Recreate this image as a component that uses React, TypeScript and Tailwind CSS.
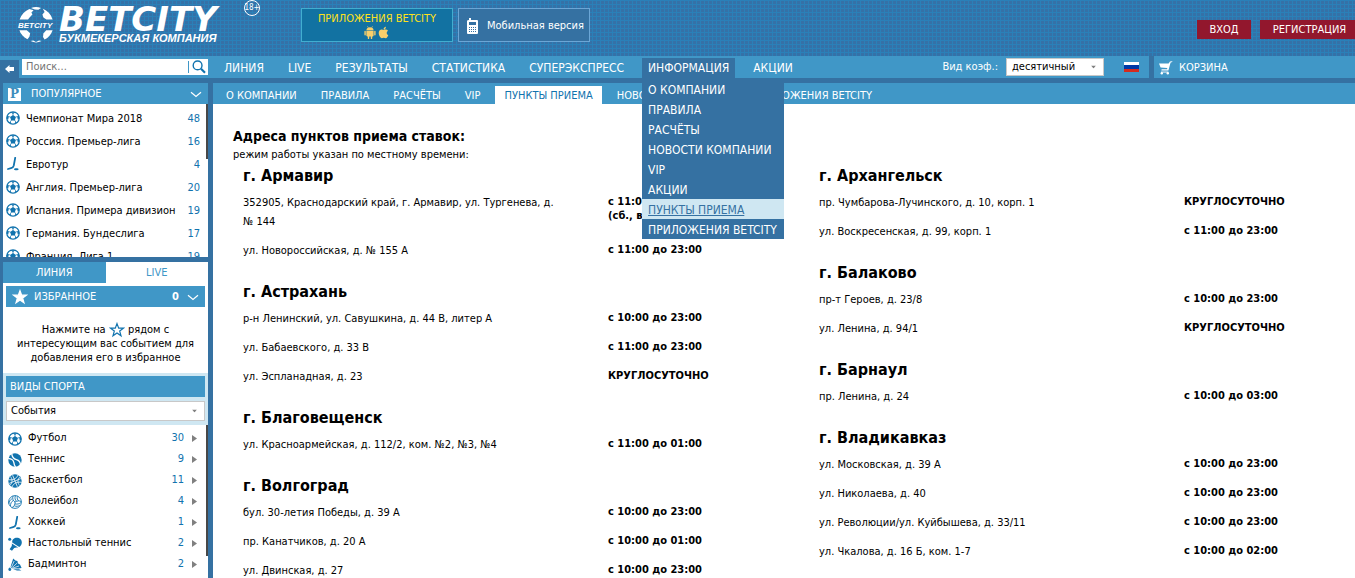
import type { ReactNode } from 'react';
import { FaApple } from 'react-icons/fa';

type IconProps = { className?: string };

function SoccerIcon({ className }: IconProps) {
  return (
    <svg viewBox="0 0 14 14" className={className} fill="none" stroke="currentColor">
      <circle cx="7" cy="7" r="6.2" strokeWidth="1.3" />
      <path d="M7 4 9.9 6.1 8.8 9.5H5.2L4.1 6.1Z" fill="currentColor" stroke="none" />
      <path d="M7 4.4V2.4M9.5 6.2l2-.8M8.6 9.1l1.3 1.9M5.4 9.1 4.1 11M4.5 6.2l-2-.8" strokeWidth=".7" />
      <path d="M4.5 1.2 7 3l2.5-1.8ZM13.1 4.2l-2 1.2.7 3 1.5-.8ZM11.7 11.2l-2.2-.4-1.4 2.4ZM2.3 11.2l2.2-.4 1.4 2.4ZM.9 4.2l2 1.2-.7 3-1.5-.8Z" fill="currentColor" stroke="none" />
    </svg>
  );
}

function HockeyIcon({ className }: IconProps) {
  return (
    <svg viewBox="0 0 14 14" className={className} fill="none" stroke="currentColor">
      <path d="M9.2.8 7.8 8.4Q7.2 10.6 5 11.2L2 12" strokeWidth="1.8" strokeLinecap="round" />
      <path d="M8 12.2c0-1.3 4.6-1.3 4.6 0s-4.6 1.3-4.6 0Z" fill="currentColor" stroke="none" />
    </svg>
  );
}

function TennisIcon({ className }: IconProps) {
  return (
    <svg viewBox="0 0 14 14" className={className}>
      <circle cx="7" cy="7" r="6.7" fill="currentColor" />
      <path d="M3.8.6C4 4.6 6 6 8.4 6.6s4 2 4 5.4M.2 5.4c3 .3 5.2 1.8 5.6 4 .2 1.4.6 3.2 1.8 4.6" fill="none" stroke="#fff" strokeWidth="1.3" />
    </svg>
  );
}

function BasketballIcon({ className }: IconProps) {
  return (
    <svg viewBox="0 0 14 14" className={className}>
      <circle cx="7" cy="7" r="6.7" fill="currentColor" />
      <path d="M1.2 9.4 12.8 4.6M4.6 1.2 9.4 12.8M.4 5.6C4.4 6.6 8.6 4.8 10 1M13.6 8.4C9.6 7.4 5.4 9.2 4 13M2.2 2.4C5 5 4.4 9.6 1.8 11.4M11.8 11.6C9 9 9.6 4.4 12.2 2.6" fill="none" stroke="#fff" strokeWidth=".8" />
    </svg>
  );
}

function VolleyballIcon({ className }: IconProps) {
  return (
    <svg viewBox="0 0 14 14" className={className} fill="none" stroke="currentColor" strokeWidth=".9">
      <circle cx="7" cy="7" r="6.4" />
      <path d="M7 7C5 5.8 4.2 3.6 5 1M7 7c2.4-1.4 4.4-1.4 6.3-.4M7 7c.2 2.6-1 4.8-3.2 5.7M8.6 6.3C7 5 6.6 3 7.4.7M10.8 5.8C9.4 5 8.8 3.2 9.5 1.3M7 8.9c2.2.5 4.2.1 5.8-1.3M6.3 10.8c2 .8 3.8.7 5.4-.5M5.2 5.5C3.4 6.6 2.4 8.6 2.5 11M3.9 3.8C2 5 1 6.6.8 8.6" />
    </svg>
  );
}

function TableTennisIcon({ className }: IconProps) {
  return (
    <svg viewBox="0 0 14 14" className={className} fill="currentColor">
      <circle cx="1.7" cy="2.2" r="1.5" />
      <path d="M4.2 5.4C4 2.4 6.2.8 8.8.8c2.8 0 5 2 5 4.8 0 2.2-1.2 3.6-2.6 4.4Z" />
      <path d="M3.8 6.4 10.2 10.6Q7.4 10.2 6.2 11L4 13.8 1.6 12.2 3.6 9.2Q4.2 8 3.8 6.4Z" />
    </svg>
  );
}

function BadmintonIcon({ className }: IconProps) {
  return (
    <svg viewBox="0 0 14 14" className={className} fill="currentColor">
      <path d="M5.2.4 7.4 2.6 9.4 3 10 5.6 12 6.4 13.6 10 10.4 10.4 3.8 10.2 2.6 8.4Z" />
      <path d="M2 9.3 3.4 11.2 2.4 13C1 13.4 0 12.2.4 10.8Z" />
      <path d="M3.4 9.2 6.2 3M4.2 9.6 9.2 5M4.8 10 11 8" stroke="#fff" strokeWidth=".7" fill="none" />
      <path d="M5 11.2h6l2.4 1.4H9Z" />
    </svg>
  );
}

function AndroidIcon({ className }: IconProps) {
  return (
    <svg viewBox="0 0 12 13" className={className} fill="currentColor">
      <path d="M2.4 4.2C2.4 2.4 4 1.2 6 1.2s3.6 1.2 3.6 3Z" />
      <path d="M3.4.2 4.4 1.8M8.6.2 7.6 1.8" stroke="currentColor" strokeWidth=".6" />
      <path d="M2.4 4.8h7.2v4.8q0 .8-.8.8H8.2v2q0 .6-.7.6t-.7-.6v-2H5.2v2q0 .6-.7.6t-.7-.6v-2H3.2q-.8 0-.8-.8Z" />
      <path d="M1.1 5.4v3.4M10.9 5.4v3.4" stroke="currentColor" strokeWidth="1.4" strokeLinecap="round" />
    </svg>
  );
}

function ChevronIcon({ className }: IconProps) {
  return (
    <svg viewBox="0 0 12 7" className={className} fill="none" stroke="currentColor" strokeWidth="1.2">
      <path d="M1 1.2 6 5.4 11 1.2" />
    </svg>
  );
}

function StarIcon({ className, filled }: IconProps & { filled?: boolean }) {
  return (
    <svg viewBox="0 0 16 16" className={className} fill={filled ? 'currentColor' : 'none'} stroke="currentColor" strokeWidth="1.2">
      <path d="M8 1.6 9.7 6.2H14.4L10.7 9.1 12 13.8 8 11 4 13.8 5.3 9.1 1.6 6.2H6.3Z" />
    </svg>
  );
}

function GlobeLogo() {
  return (
    <svg viewBox="0 0 38 38" className="h-[38px] w-[38px] shrink-0 overflow-visible">
      <g fill="#fff">
        <path d="M2.6 13.4C4.4 8.4 8 4.8 12.4 3L16.6 4.2 14.4 6.6 15.4 8.4 12.8 11.2 11 13.6Z" />
        <path d="M14 2Q19 .2 24 2L21.4 3.8 17.8 3.4Z" />
        <path d="M25.8 2.8C30.4 4.6 34 8.2 35.6 13.4H29.4L26.4 11.6 25.4 8.4 27.6 6Z" />
        <path d="M2.4 24.2H9.8L13.2 27.2 12.4 30.8 10.4 33.2C6.4 31 3.6 28 2.4 24.2Z" />
        <path d="M35.6 24.2C34.2 28.4 31.4 31.6 27.6 33.6L26 31 26.4 27.6 29.2 24.2Z" />
        <path d="M13.6 35 16.2 34.6 19 36 22 34.6 24.6 35Q19 37.8 13.6 35Z" />
      </g>
      <text x="1" y="22" fill="#fff" fontSize="8" fontWeight="700" fontStyle="italic" fontFamily="Liberation Sans, sans-serif">
        BETCITY
      </text>
    </svg>
  );
}

const popular = [
  { title: 'Чемпионат Мира 2018', count: 48, icon: SoccerIcon },
  { title: 'Россия. Премьер-лига', count: 16, icon: SoccerIcon },
  { title: 'Евротур', count: 4, icon: HockeyIcon },
  { title: 'Англия. Премьер-лига', count: 20, icon: SoccerIcon },
  { title: 'Испания. Примера дивизион', count: 19, icon: SoccerIcon },
  { title: 'Германия. Бундеслига', count: 17, icon: SoccerIcon },
  { title: 'Франция. Лига 1', count: 19, icon: SoccerIcon },
];

const sports = [
  { title: 'Футбол', count: 30, icon: SoccerIcon },
  { title: 'Теннис', count: 9, icon: TennisIcon },
  { title: 'Баскетбол', count: 11, icon: BasketballIcon },
  { title: 'Волейбол', count: 4, icon: VolleyballIcon },
  { title: 'Хоккей', count: 1, icon: HockeyIcon },
  { title: 'Настольный теннис', count: 2, icon: TableTennisIcon },
  { title: 'Бадминтон', count: 2, icon: BadmintonIcon },
];

const mainNav = ['ЛИНИЯ', 'LIVE', 'РЕЗУЛЬТАТЫ', 'СТАТИСТИКА', 'СУПЕРЭКСПРЕСС', 'ИНФОРМАЦИЯ', 'АКЦИИ'];

const infoMenu = ['О КОМПАНИИ', 'ПРАВИЛА', 'РАСЧЁТЫ', 'НОВОСТИ КОМПАНИИ', 'VIP', 'АКЦИИ', 'ПУНКТЫ ПРИЕМА', 'ПРИЛОЖЕНИЯ BETCITY'];

const subNav = ['О КОМПАНИИ', 'ПРАВИЛА', 'РАСЧЁТЫ', 'VIP', 'ПУНКТЫ ПРИЕМА', 'НОВОСТИ КОМПАНИИ', 'ПРИЛОЖЕНИЯ BETCITY'];

type City = { name: string; points: [string, string][] };

const leftCities: City[] = [
  {
    name: 'г. Армавир',
    points: [
      ['352905, Краснодарский край, г. Армавир, ул. Тургенева, д. № 144', 'с 11:00 до 22:00 (сб., вс. до 23:00)'],
      ['ул. Новороссийская, д. № 155 А', 'с 11:00 до 23:00'],
    ],
  },
  {
    name: 'г. Астрахань',
    points: [
      ['р-н Ленинский, ул. Савушкина, д. 44 В, литер А', 'с 10:00 до 23:00'],
      ['ул. Бабаевского, д. 33 В', 'с 11:00 до 23:00'],
      ['ул. Эспланадная, д. 23', 'КРУГЛОСУТОЧНО'],
    ],
  },
  {
    name: 'г. Благовещенск',
    points: [['ул. Красноармейская, д. 112/2, ком. №2, №3, №4', 'с 11:00 до 01:00']],
  },
  {
    name: 'г. Волгоград',
    points: [
      ['бул. 30-летия Победы, д. 39 А', 'с 10:00 до 23:00'],
      ['пр. Канатчиков, д. 20 А', 'с 10:00 до 01:00'],
      ['ул. Двинская, д. 27', 'с 10:00 до 23:00'],
    ],
  },
];

const rightCities: City[] = [
  {
    name: 'г. Архангельск',
    points: [
      ['пр. Чумбарова-Лучинского, д. 10, корп. 1', 'КРУГЛОСУТОЧНО'],
      ['ул. Воскресенская, д. 99, корп. 1', 'с 11:00 до 23:00'],
    ],
  },
  {
    name: 'г. Балаково',
    points: [
      ['пр-т Героев, д. 23/8', 'с 10:00 до 23:00'],
      ['ул. Ленина, д. 94/1', 'КРУГЛОСУТОЧНО'],
    ],
  },
  {
    name: 'г. Барнаул',
    points: [['пр. Ленина, д. 24', 'с 10:00 до 03:00']],
  },
  {
    name: 'г. Владикавказ',
    points: [
      ['ул. Московская, д. 39 А', 'с 10:00 до 23:00'],
      ['ул. Николаева, д. 40', 'с 10:00 до 23:00'],
      ['ул. Революции/ул. Куйбышева, д. 33/11', 'с 10:00 до 23:00'],
      ['ул. Чкалова, д. 16 Б, ком. 1-7', 'с 10:00 до 02:00'],
    ],
  },
];

function Header() {
  return (
    <header className="flex h-14 shrink-0 items-start bg-[#3571a7] bg-[linear-gradient(to_right,#2a80b8_1px,transparent_1px),linear-gradient(to_bottom,#2a80b8_1px,transparent_1px)] bg-[size:4px_4px] text-white">
      <a href="#" className="flex w-[301px] pt-1.5 pl-[17px]">
        <GlobeLogo />
        <span className="ml-1 flex w-[177px] flex-col font-['Liberation_Sans',sans-serif] font-bold italic">
          <span className="font-['DejaVu_Sans',sans-serif] text-[34px] leading-[26px]">BETCITY</span>
          <span className="text-[11px] leading-3 whitespace-nowrap">БУКМЕКЕРСКАЯ КОМПАНИЯ</span>
        </span>
        <span className="-mt-1.5 ml-2 flex h-4 w-4 items-center justify-center rounded-full border border-white text-[8px]">18+</span>
      </a>
      <div className="flex gap-[5px] pt-2">
        <a href="#" className="flex h-[34px] w-[152px] flex-col items-center border border-[#42aed0] bg-[#1272a2] pt-[3px] text-[11px] leading-[14px] whitespace-nowrap text-[#ffe11b]">
          ПРИЛОЖЕНИЯ BETCITY
          <span className="flex gap-px text-[#f9cf6a]">
            <AndroidIcon className="h-[13px] w-3" />
            <FaApple className="h-[13px] w-[13px]" />
          </span>
        </a>
        <a href="#" className="flex h-[34px] w-[132px] items-center gap-2 border border-[#6ba6d6] bg-[#3571a2] pt-0.5 pl-2 text-[11px] whitespace-nowrap">
          <svg viewBox="0 0 12 16" className="h-4 w-3 shrink-0">
            <path d="M2 0h2v2h6q1 0 1 1v12q0 1-1 1H1q-1 0-1-1V3q0-1 2-1Z" fill="#fff" />
            <path d="M2 4h7v3H2ZM2 9h1v1H2ZM4 9h1v1H4ZM6 9h1v1H6ZM8 9h1v1H8ZM2 11h1v1H2ZM4 11h1v1H4ZM6 11h1v1H6ZM8 11h1v1H8ZM2 13h1v1H2ZM4 13h1v1H4ZM6 13h1v1H6ZM8 13h1v1H8Z" fill="#3571a2" />
          </svg>
          Мобильная версия
        </a>
      </div>
      <div className="ml-auto flex gap-[9px] pt-5 text-[11px] leading-5">
        <button className="h-[19px] w-[54px] bg-[#92172d]">ВХОД</button>
        <button className="h-[19px] w-[95px] bg-[#92172d] pl-1">РЕГИСТРАЦИЯ</button>
      </div>
    </header>
  );
}

function NavBar() {
  return (
    <div className="flex h-[22px] shrink-0 text-white">
      <div className="flex min-w-0 grow bg-[#4097c7]">
        <div className="flex w-[218px] shrink-0 items-end gap-[3px]">
          <button aria-label="Свернуть" className="flex h-[18px] w-[19px] items-center justify-center bg-[#3571a2]">
            <svg viewBox="0 0 9 8" className="h-2 w-[9px]" fill="#fff">
              <path d="M0 4 4.5 0V2H9V6H4.5V8Z" />
            </svg>
          </button>
          <form className="mb-[3px] flex h-4 w-[186px] items-center bg-white">
            <input aria-label="Поиск" placeholder="Поиск..." className="h-3 w-[167px] border-r border-[#4097c7] pt-px pl-1 text-[11px] text-black outline-none placeholder:text-[#757575]" />
            <button type="button" aria-label="Найти" className="ml-[3px] text-[#1173ae]">
              <svg viewBox="0 0 14 14" className="h-[14px] w-[14px]" fill="none" stroke="currentColor">
                <circle cx="5.6" cy="5.4" r="4.4" strokeWidth="1.4" />
                <path d="m9 8.8 4 4" strokeWidth="2.2" />
              </svg>
            </button>
          </form>
        </div>
        <nav className="flex gap-3 pt-0.5 text-xs leading-5 whitespace-nowrap">
          {mainNav.map((item) =>
            item === 'ИНФОРМАЦИЯ' ? (
              <div key={item} className="relative bg-[#3571a2]">
                <a href="#" className="block px-1.5">{item}</a>
                <div className="absolute top-full left-0 z-10 w-[142px] bg-[#3571a2] pt-px">
                  {infoMenu.map((entry) => (
                    <a
                      key={entry}
                      href="#"
                      className={`block h-5 px-1.5 pt-px ${entry === 'ПУНКТЫ ПРИЕМА' ? 'bg-[#cfe7f2] text-[#3571a2] underline' : ''}`}
                    >
                      {entry}
                    </a>
                  ))}
                </div>
              </div>
            ) : (
              <a key={item} href="#" className="px-1.5">{item}</a>
            ),
          )}
        </nav>
        <div className="mr-2.5 ml-auto flex items-center text-[11px]">
          <label htmlFor="odds" className="mr-2">Вид коэф.:</label>
          <div className="relative mr-5">
            <select id="odds" className="block h-[18px] w-[98px] appearance-none border border-[#c8c8c8] bg-white pl-[5px] text-[11px] leading-4 text-black">
              <option>десятичный</option>
            </select>
            <SelectArrow />
          </div>
          <svg viewBox="0 0 15 10" className="h-2.5 w-[15px]">
            <path d="M0 0h15v4H0Z" fill="#fff" />
            <path d="M0 3h15v4H0Z" fill="#0039a6" />
            <path d="M0 7h15v3H0Z" fill="#d52b1e" />
          </svg>
        </div>
      </div>
      <a href="#" className="ml-[5px] flex w-[201px] items-center gap-1.5 bg-[#4097c7] pt-0.5 pl-1 text-[11px]">
        <svg viewBox="0 0 15 14" className="h-[14px] w-[15px]" fill="#fff">
          <path d="M1 2.5h9.6L12 .6l2.4-.4-.2.8-1.6.4-2.2 8h-7l.2-1.2h5.6V7L2.6 6.4Z" />
          <path d="M3 10.6h7.4v.9H3Z" />
          <circle cx="3.8" cy="12.2" r="1.2" />
          <circle cx="9.8" cy="12.2" r="1.2" />
        </svg>
        КОРЗИНА
      </a>
    </div>
  );
}

function SelectArrow() {
  return (
    <svg viewBox="0 0 5 3" className="pointer-events-none absolute top-1/2 right-2 h-[3px] w-[5px] -translate-y-1/2" fill="#808080">
      <path d="M0 0h5L2.5 3Z" />
    </svg>
  );
}

function ScrollThumb({ className }: IconProps) {
  return <div className={`absolute top-0 right-0 w-0.5 bg-[#484848] ${className}`} />;
}

function PanelBar({ children }: { children: ReactNode }) {
  return <div className="flex h-[21px] items-center bg-[#4097c7] pt-px text-[11px] text-white">{children}</div>;
}

function Sidebar() {
  return (
    <aside className="flex w-[213px] shrink-0 flex-col pr-[5px] pl-[3px] text-[11px]">
      <PanelBar>
        <span className="mr-2.5 ml-[5px] flex h-[13px] w-[13px] items-center justify-center bg-white font-['DejaVu_Serif',serif] text-xs leading-3 font-bold text-[#3c8dbd]">P</span>
        ПОПУЛЯРНОЕ
        <ChevronIcon className="mr-1.5 ml-auto h-[7px] w-3" />
      </PanelBar>
      <div className="relative h-[153px] shrink-0 overflow-hidden bg-white pt-1">
        {popular.map(({ title, count, icon: Icon }) => (
          <a key={title} href="#" className="flex h-[23px] items-center pr-2 pl-[3px]">
            <Icon className="mr-1.5 mb-1 h-[14px] w-[14px] text-[#1173ae]" />
            <span>{title}</span>
            <span className="ml-auto text-[#1173ae]">{count}</span>
          </a>
        ))}
        <ScrollThumb className="h-[55px]" />
      </div>

      <div className="mt-[5px] flex h-[21px] shrink-0 bg-white leading-5">
        <button className="w-1/2 bg-[#4097c7] text-white">ЛИНИЯ</button>
        <button className="w-1/2 text-[#4097c7]">LIVE</button>
      </div>
      <div className="bg-white px-[3px] pt-[3px] pb-2">
        <PanelBar>
          <StarIcon filled className="mr-1.5 ml-1.5 h-4 w-4" />
          ИЗБРАННОЕ
          <span className="ml-auto font-bold">0</span>
          <ChevronIcon className="mr-1.5 ml-2 h-[7px] w-3" />
        </PanelBar>
        <p className="mt-4 px-2 text-center leading-[14px]">
          Нажмите на <StarIcon className="-my-1 inline h-4 w-4 align-middle text-[#1173ae]" /> рядом с<br />
          интересующим вас событием для<br />
          добавления его в избранное
        </p>
      </div>

      <div className="bg-[#cfe7f2] px-[3px] pt-[3px] pb-1">
        <PanelBar>
          <span className="ml-1">ВИДЫ СПОРТА</span>
        </PanelBar>
        <div className="relative mt-1">
          <select aria-label="События" className="block h-5 w-full appearance-none border border-[#c8c8c8] bg-white pl-1 text-[11px] leading-4">
            <option>События</option>
          </select>
          <SelectArrow />
        </div>
      </div>
      <div className="relative min-h-0 grow overflow-hidden bg-white pt-[3px]">
        {sports.map(({ title, count, icon: Icon }) => (
          <a key={title} href="#" className="flex h-[21px] items-center pr-[11px] pl-[5px]">
            <Icon className="mr-1.5 h-[14px] w-[14px] text-[#1173ae]" />
            <span>{title}</span>
            <span className="mr-2 ml-auto text-[#1173ae]">{count}</span>
            <svg viewBox="0 0 5 7" className="h-[7px] w-[5px]" fill="#808080">
              <path d="M0 0 5 3.5 0 7Z" />
            </svg>
          </a>
        ))}
        <ScrollThumb className="h-[131px]" />
      </div>
    </aside>
  );
}

function CityBlock({ city }: { city: City }) {
  return (
    <section className="mt-2.5 first:mt-0">
      <h2 className="mb-[5px] text-base leading-6 font-bold">{city.name}</h2>
      <table className="text-left">
        <tbody>
          {city.points.map(([address, hours]) => (
            <tr key={address} className="align-top">
              <td className="w-[365px] pr-[50px] pb-2.5 leading-[19px]">{address}</td>
              <td className="w-[120px] pt-0.5 leading-[14px] font-bold">{hours}</td>
            </tr>
          ))}
        </tbody>
      </table>
    </section>
  );
}

export default function App() {
  return (
    <div className="flex h-screen flex-col overflow-hidden bg-[#3571a2] font-['DejaVu_Sans_Condensed','Noto_Sans',sans-serif] text-black">
      <Header />
      <NavBar />
      <div className="flex min-h-0 grow pt-[5px]">
        <Sidebar />
        <div className="min-w-0 grow overflow-hidden bg-white">
          <nav className="flex h-[21px] gap-1.5 bg-[#4097c7] pt-[3px] pl-1 text-[11px] leading-5 whitespace-nowrap text-white">
            {subNav.map((item) => (
              <a
                key={item}
                href="#"
                className={`h-[18px] px-[9px] ${item === 'ПУНКТЫ ПРИЕМА' ? 'bg-white text-[#1173ae]' : ''}`}
              >
                {item}
              </a>
            ))}
          </nav>
          <main className="pt-[22px] pl-5 text-[11px]">
            <h1 className="text-sm leading-5 font-bold">Адреса пунктов приема ставок:</h1>
            <p className="leading-[18px]">режим работы указан по местному времени:</p>
            <div className="grid grid-cols-[576px_1fr] pl-2.5">
              <div>
                {leftCities.map((city) => (
                  <CityBlock key={city.name} city={city} />
                ))}
              </div>
              <div>
                {rightCities.map((city) => (
                  <CityBlock key={city.name} city={city} />
                ))}
              </div>
            </div>
          </main>
        </div>
      </div>
    </div>
  );
}
